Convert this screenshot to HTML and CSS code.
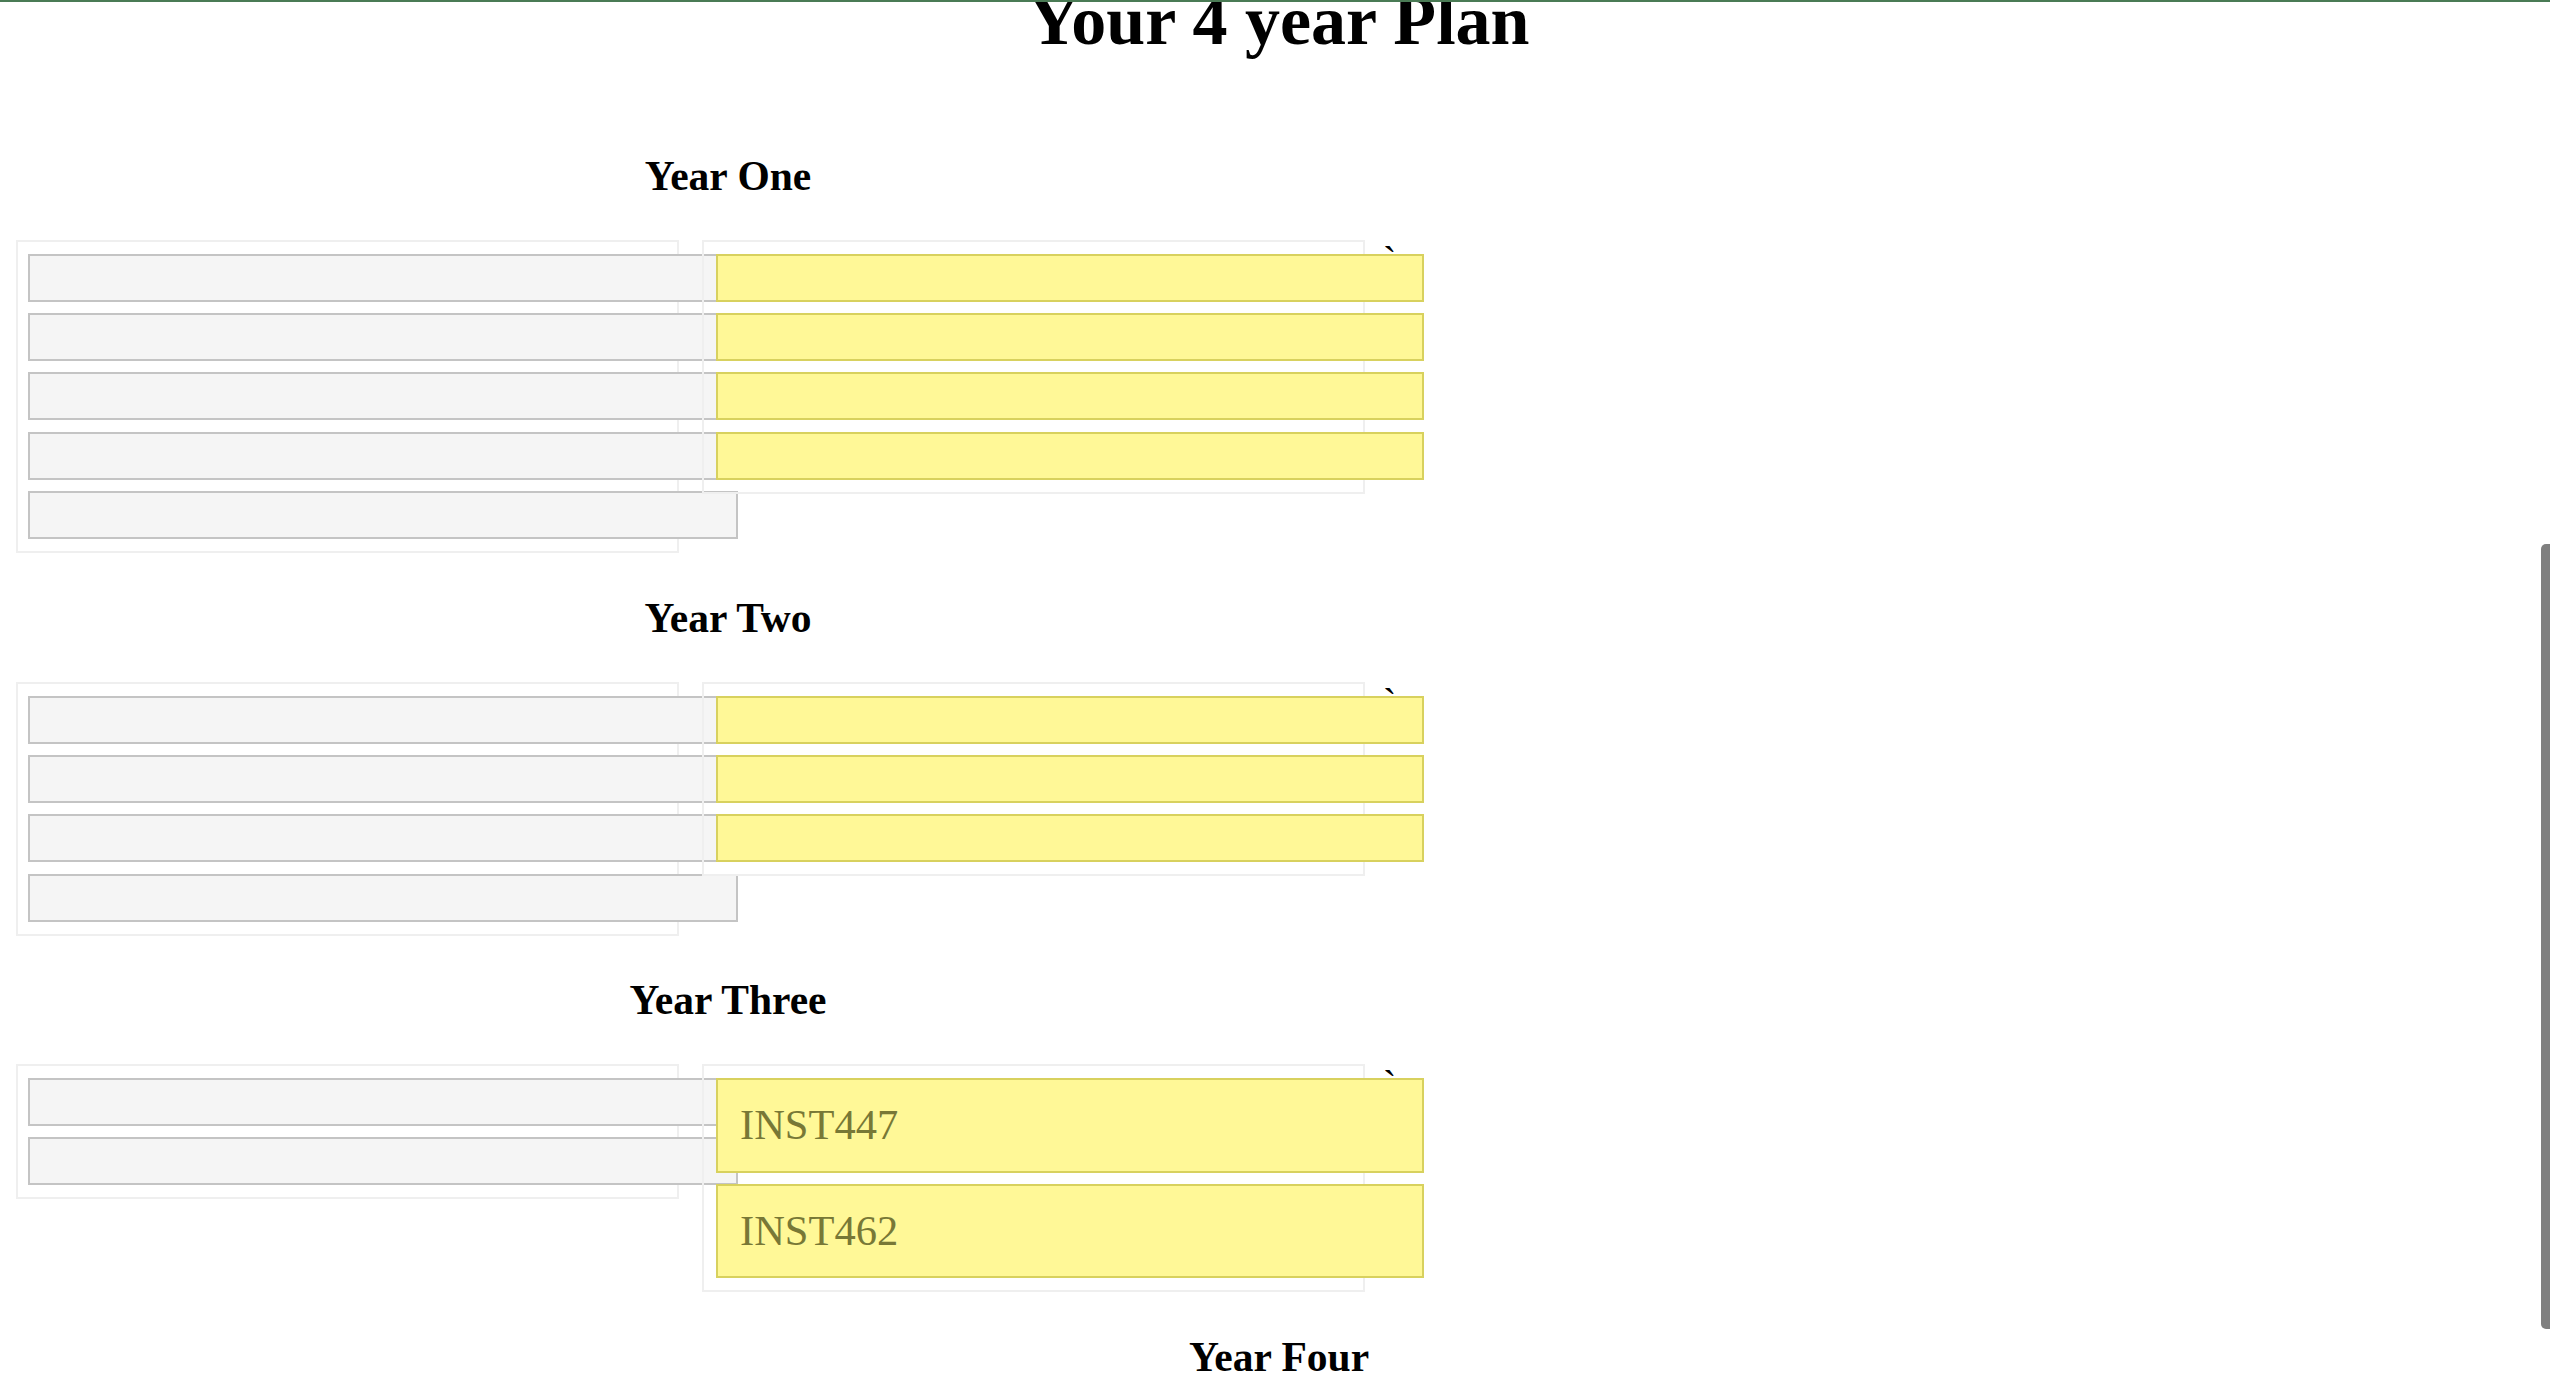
FILE: index.html
```html
<!DOCTYPE html>
<html lang="en">
<head>
<meta charset="utf-8">
<title>Your 4 year Plan</title>
<link rel="stylesheet" href="styles.css">
</head>
<body>
<div class="topline"></div>
<div class="page">
  <h1 class="title">Your 4 year Plan</h1>

  <section class="year">
    <h2 class="year-title">Year One</h2>
    <div class="year-row">
      <div class="box box-left">
        <div class="course course-gray"></div>
        <div class="course course-gray"></div>
        <div class="course course-gray"></div>
        <div class="course course-gray"></div>
        <div class="course course-gray"></div>
      </div>
      <div class="box box-right">
        <div class="course course-yellow"></div>
        <div class="course course-yellow"></div>
        <div class="course course-yellow"></div>
        <div class="course course-yellow"></div>
      </div>
      <span class="tick">`</span>
    </div>
  </section>

  <section class="year">
    <h2 class="year-title">Year Two</h2>
    <div class="year-row">
      <div class="box box-left">
        <div class="course course-gray"></div>
        <div class="course course-gray"></div>
        <div class="course course-gray"></div>
        <div class="course course-gray"></div>
      </div>
      <div class="box box-right">
        <div class="course course-yellow"></div>
        <div class="course course-yellow"></div>
        <div class="course course-yellow"></div>
      </div>
      <span class="tick">`</span>
    </div>
  </section>

  <section class="year">
    <h2 class="year-title">Year Three</h2>
    <div class="year-row">
      <div class="box box-left">
        <div class="course course-gray"></div>
        <div class="course course-gray"></div>
      </div>
      <div class="box box-right">
        <div class="course course-yellow">INST447</div>
        <div class="course course-yellow">INST462</div>
      </div>
      <span class="tick">`</span>
    </div>
  </section>

  <h2 class="year-title">Year Four</h2>
</div>
<div class="scroll-thumb"></div>
</body>
</html>
```

FILE: styles.css
```css
html {
  overflow: hidden;
}

body {
  margin: 0;
  background: #ffffff;
  color: #000000;
  font-family: "Liberation Serif", "Times New Roman", Times, serif;
}

.topline {
  position: fixed;
  top: 0;
  left: 0;
  right: 0;
  height: 2px;
  background: #4a7b55;
  z-index: 5;
}

.page {
  padding-left: 8px;
}

.title {
  margin: 0 0 110px;
  font-size: 70px;
  font-weight: 700;
  line-height: 42.7px;
  text-align: center;
}

.year {
  width: 1440px;
}

.year-title {
  margin: 41.5px 0 41px;
  font-size: 41.5px;
  font-weight: 700;
  line-height: 46px;
  text-align: center;
}

.year-row {
  display: flex;
  align-items: flex-start;
  gap: 23px;
  padding-left: 8px;
}

.box {
  flex: none;
  min-width: 0;
  width: 663px;
  box-sizing: border-box;
  border: 2px solid #efefef;
  padding: 12px 10px;
}

.box-right {
  padding-left: 12px;
}

.course {
  box-sizing: border-box;
  width: 710px;
  padding: 22px;
  border: 2px solid;
  margin-bottom: 11.33px;
  font-size: 42.5px;
  line-height: 46.5px;
}

.course:last-child {
  margin-bottom: 0;
}

.course-gray {
  background: #f5f5f5;
  border-color: #c4c4c4;
}

.course-yellow {
  width: 708px;
  background: #fff897;
  border-color: #d8d15e;
  color: #787836;
}

.tick {
  margin: -2px 0 0 -5px;
  font-size: 40px;
  line-height: 46px;
}

.scroll-thumb {
  position: fixed;
  right: 0;
  top: 544px;
  width: 9px;
  height: 785px;
  background: #7f7f7f;
  border-radius: 5px 0 0 5px;
}
```
